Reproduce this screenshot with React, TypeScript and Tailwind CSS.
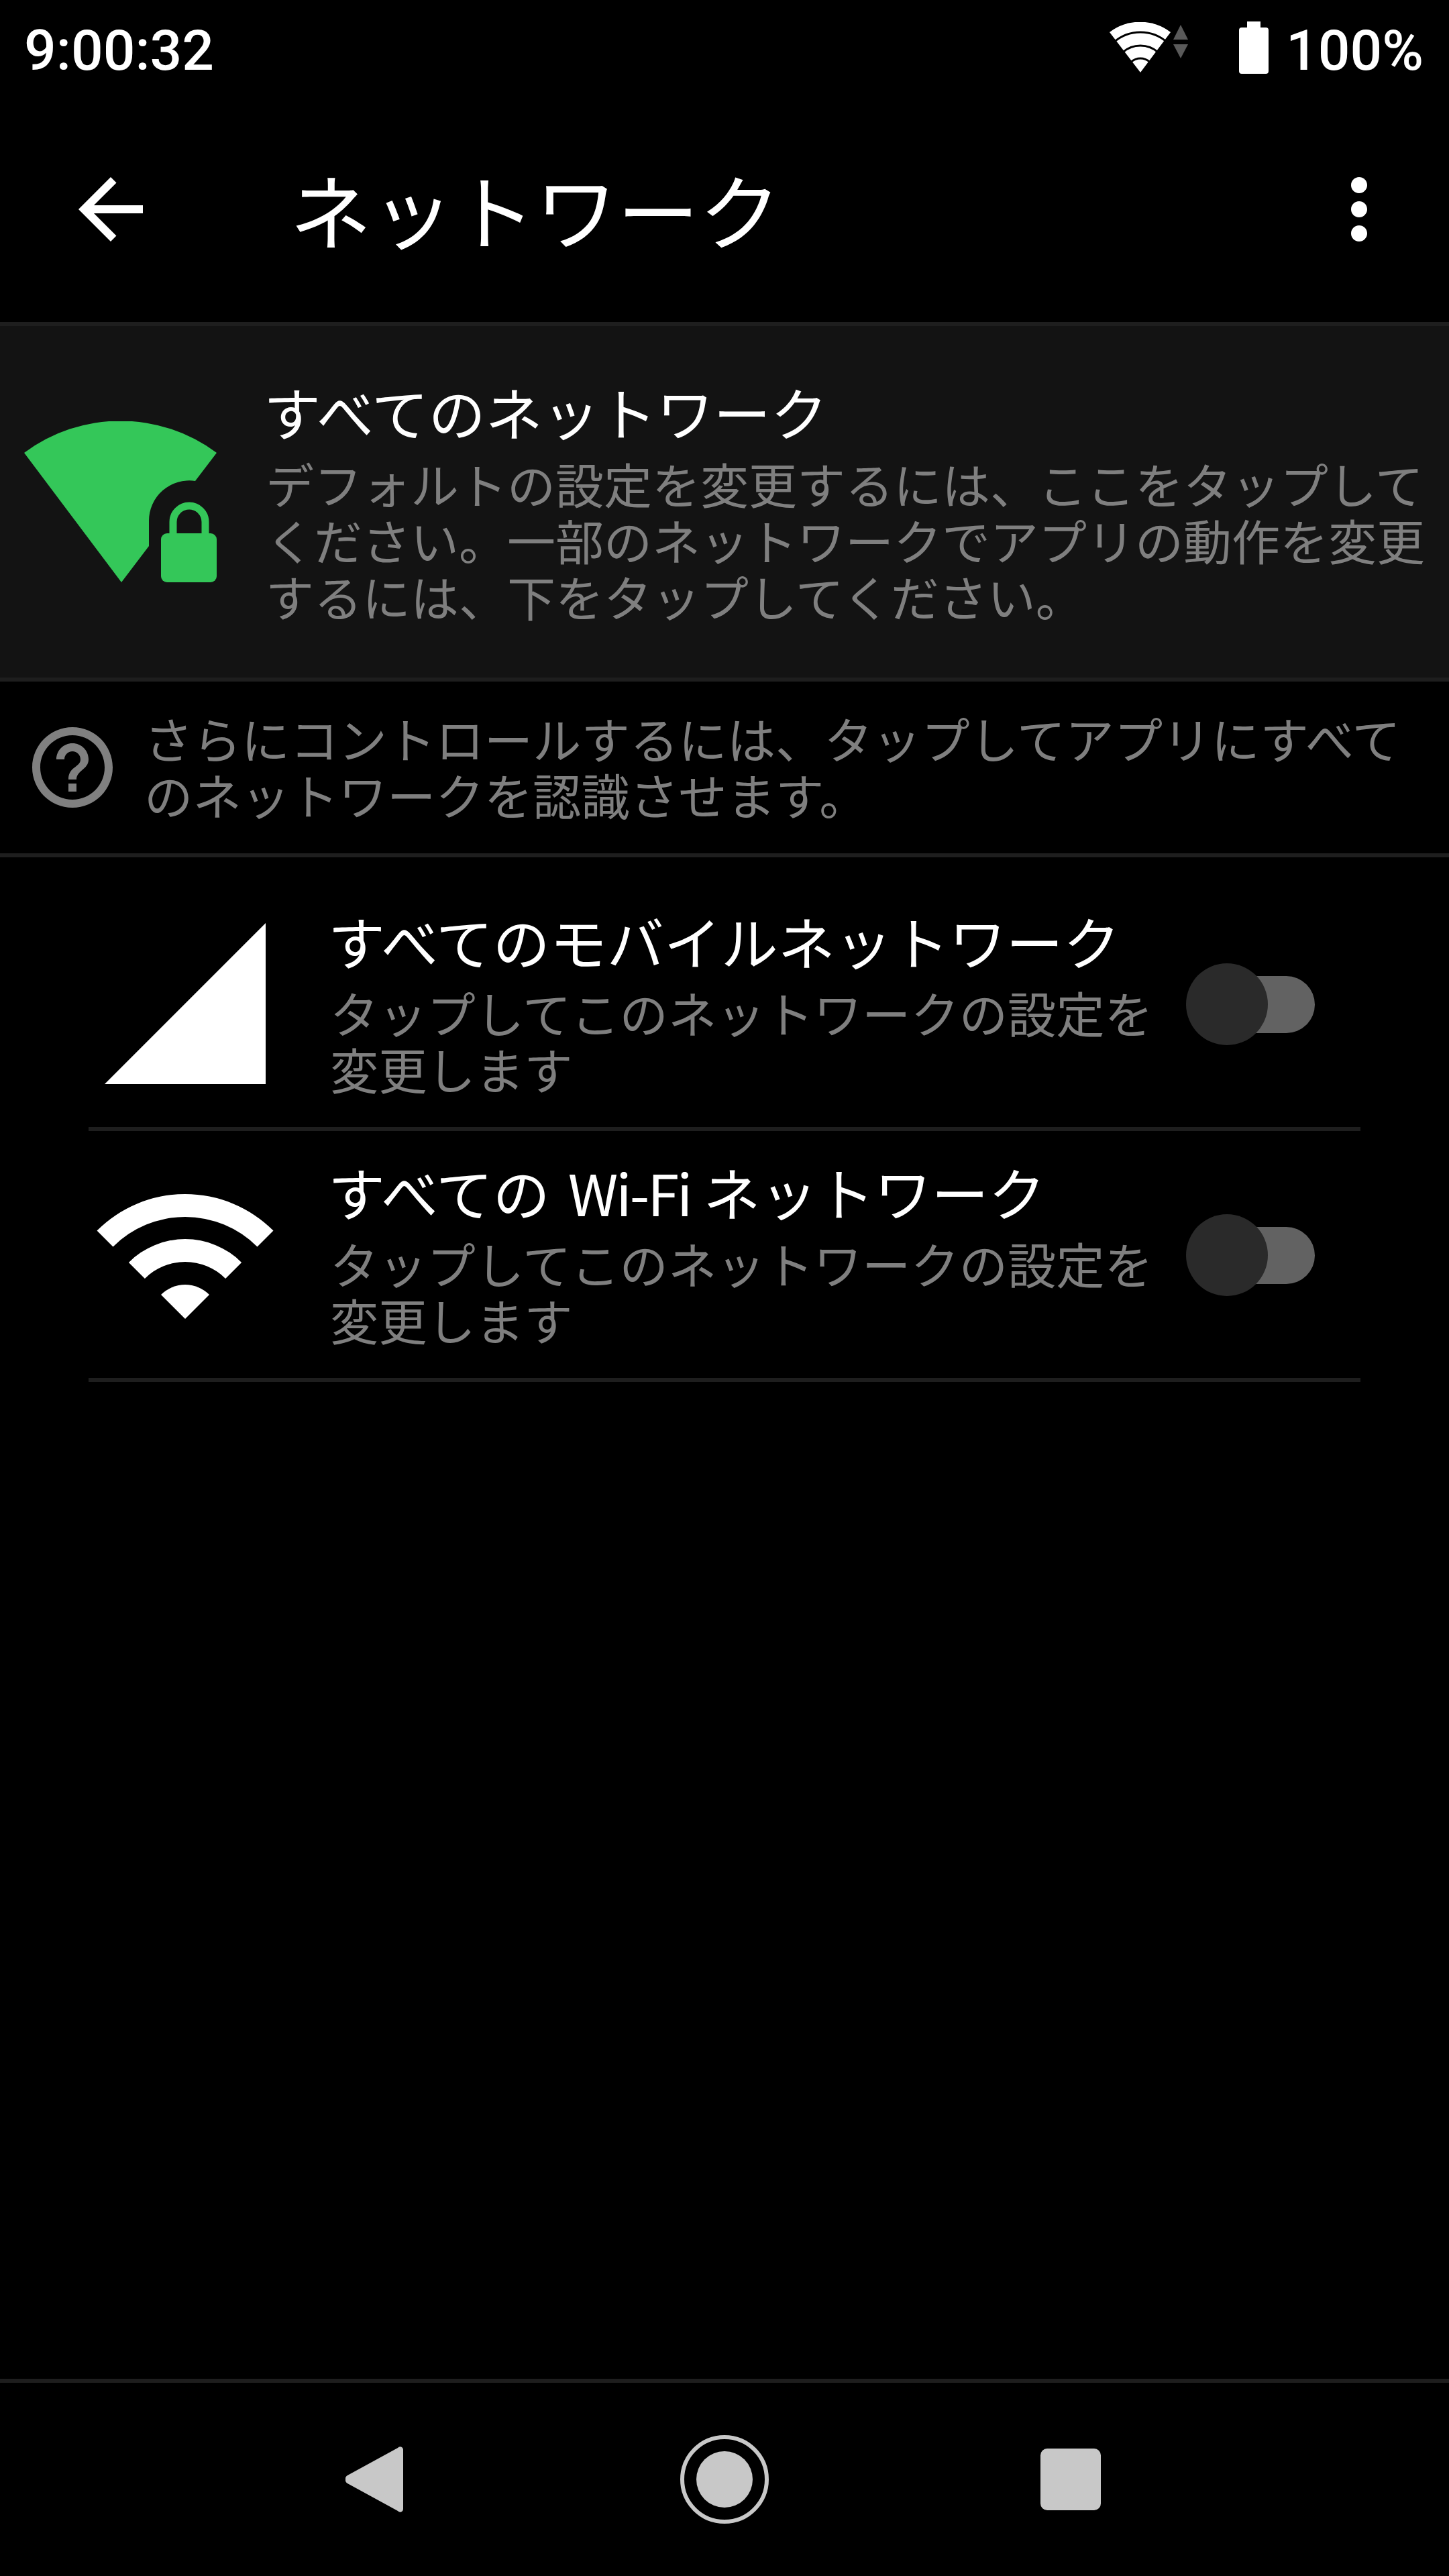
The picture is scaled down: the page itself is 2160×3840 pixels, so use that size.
import React from "react";

function SmallWifi() {
  const arc = (r: number) => {
    const x = r * 0.66;
    const y = r * 0.75;
    return `M${46 - x} ${75 - y}A${r} ${r} 0 0 1 ${46 + x} ${75 - y}`;
  };
  return (
    <svg width="92" height="76" viewBox="0 0 92 76">
      <path d="M0 15A75 75 0 0 1 91 15L46 75Z" fill="#fff" />
      <path d={arc(60)} stroke="#000" strokeWidth="3" fill="none" />
      <path d={arc(40)} stroke="#000" strokeWidth="3" fill="none" />
      <path d={arc(21)} stroke="#000" strokeWidth="3" fill="none" />
    </svg>
  );
}

function Arrows() {
  return (
    <svg width="22" height="52" viewBox="0 0 22 52" className="ml-[3px] mt-[4px]">
      <path d="M11 0L22 22H0Z" fill="#5a5a5a" />
      <path d="M0 29H22L11 50Z" fill="#5a5a5a" />
    </svg>
  );
}

function Battery() {
  return (
    <svg width="44" height="78" viewBox="0 0 44 78">
      <path d="M12 0H32V9H40a4 4 0 0 1 4 4V74a4 4 0 0 1-4 4H4a4 4 0 0 1-4-4V13a4 4 0 0 1 4-4H12Z" fill="#fff" />
    </svg>
  );
}

function GreenWifi() {
  return (
    <svg width="288" height="240" viewBox="0 0 288 240" className="shrink-0">
      <path
        d="M0 47A240 240 0 0 1 287 47L255 89A60 60 0 0 0 186 149V186L145 240Z"
        fill="#34c759"
      />
      <rect x="204" y="167" width="83" height="73" rx="9" fill="#34c759" />
      <path d="M222 170V150a24 24 0 0 1 48 0V170" stroke="#34c759" strokeWidth="11" fill="none" />
    </svg>
  );
}

function HelpIcon() {
  return (
    <svg width="144" height="144" viewBox="0 0 24 24" className="shrink-0" fill="#808080">
      <path d="M11 18h2v-2h-2v2zm1-16C6.48 2 2 6.48 2 12s4.48 10 10 10 10-4.48 10-10S17.52 2 12 2zm0 18c-4.41 0-8-3.59-8-8s3.59-8 8-8 8 3.59 8 8-3.59 8-8 8zm0-14c-2.21 0-4 1.79-4 4h2c0-1.1.9-2 2-2s2 .9 2 2c0 2-3 1.75-3 5h2c0-2.25 3-2.5 3-5 0-2.21-1.79-4-4-4z" />
    </svg>
  );
}

function Signal() {
  return (
    <svg width="240" height="240" viewBox="0 0 240 240">
      <path d="M240 0V240H0Z" fill="#fff" />
    </svg>
  );
}

function BigWifi() {
  return (
    <svg width="264" height="186" viewBox="0 0 264 186" className="mt-[6px]" fill="#fff">
      <path d="M.5 54.5A186 186 0 0 1 263.5 54.5L239.5 78.5A152 152 0 0 0 24.5 78.5Z" />
      <path d="M47.9 101.900A119 119 0 0 1 216.100 101.900L192.100 125.900A85 85 0 0 0 71.900 125.900Z" />
      <path d="M96 150A51 51 0 0 1 168 150L132 186Z" />
    </svg>
  );
}

function Switch() {
  return (
    <div className="relative ml-[23px] mt-[2px] flex h-[122px] w-[192px] shrink-0 items-center justify-end">
      <div className="h-[85px] w-[170px] rounded-full bg-[#626262]" />
      <div className="absolute left-0 top-0 h-[122px] w-[122px] rounded-full bg-[#2a2a2a]" />
    </div>
  );
}

function Row({ icon, title, sub }: { icon: React.ReactNode; title: React.ReactNode; sub: string }) {
  return (
    <div className="mx-[132px] flex h-[374px] items-center border-b-[6px] border-[#1e1e1e]">
      <div className="flex h-[240px] w-[288px] shrink-0 items-center justify-center">{icon}</div>
      <div className="-mt-[10px] ml-[69px] w-[1256px]">
        <div className="mb-[10px] text-[85px] leading-[110px] text-white">{title}</div>
        <div className="ml-[3px] text-[72.3px] leading-[84px] text-[#7f7f7f]">{sub}</div>
      </div>
      <Switch />
    </div>
  );
}

export default function App() {
  return (
    <div
      lang="ja"
      className="flex h-[3840px] w-[2160px] flex-col overflow-hidden bg-black font-['Noto_Sans_CJK_JP',sans-serif]"
    >
      <div className="flex h-[144px] shrink-0 items-start justify-between pl-[36px] pr-[38px] font-['Roboto',sans-serif] text-[84px] leading-[144px] text-white">
        <span className="font-medium leading-[151px]">9:00:32</span>
        <div className="flex items-start">
          <div className="mt-[33px] flex">
            <SmallWifi />
            <Arrows />
          </div>
          <div className="ml-[76px] mt-[32px]">
            <Battery />
          </div>
          <span className="ml-[26px] font-medium leading-[151px]">100%</span>
        </div>
      </div>

      <div className="flex h-[336px] shrink-0 items-center justify-between">
        <div className="flex items-center">
          <svg width="144" height="144" viewBox="0 0 24 24" fill="#fff" className="ml-[93px]">
            <path d="M20 11H7.83l5.59-5.59L12 4l-8 8 8 8 1.41-1.41L7.83 13H20v-2z" />
          </svg>
          <span className="-mt-[4px] ml-[195px] text-[122px] leading-[144px] text-white">ネットワーク</span>
        </div>
        <svg width="144" height="144" viewBox="0 0 24 24" fill="#fff" className="mr-[62px]">
          <path d="M12 8c1.100 0 2-.9 2-2s-.9-2-2-2-2 .9-2 2 .9 2 2 2zm0 2c-1.100 0-2 .9-2 2s.9 2 2 2 2-.9 2-2-.9-2-2-2zm0 6c-1.100 0-2 .9-2 2s.9 2 2 2 2-.9 2-2-.9-2-2-2z" />
        </svg>
      </div>

      <div className="flex h-[536px] shrink-0 border-y-[6px] border-[#1e1e1e] bg-[#131313] pl-[36px]">
        <div className="mt-[142px]">
          <GreenWifi />
        </div>
        <div className="ml-[69px] mt-[72px] w-[1748px]">
          <div className="mb-[10px] text-[85px] leading-[110px] text-white">すべてのネットワーク</div>
          <div className="ml-[3px] text-[72px] leading-[84px] text-[#7f7f7f]">
            デフォルトの設定を変更するには、ここをタップしてください。一部のネットワークでアプリの動作を変更するには、下をタップしてください。
          </div>
        </div>
      </div>

      <div className="flex h-[262px] shrink-0 items-center border-b-[6px] border-[#1e1e1e] pl-[36px]">
        <HelpIcon />
        <div className="-mt-[4px] ml-[35px] w-[1908px] text-[72.4px] leading-[84px] text-[#7f7f7f]">
          さらにコントロールするには、タップしてアプリにすべてのネットワークを認識させます。
        </div>
      </div>

      <div className="flex-1 pt-[34px]">
        <Row icon={<Signal />} title="すべてのモバイルネットワーク" sub="タップしてこのネットワークの設定を変更します" />
        <Row
          icon={<BigWifi />}
          title={
            <>
              すべての <span className="ml-[8px] tracking-[-3px]">Wi-Fi</span> ネットワーク
            </>
          }
          sub="タップしてこのネットワークの設定を変更します"
        />
      </div>

      <div className="flex h-[294px] shrink-0 items-start border-t-[6px] border-[#1e1e1e]">
        <svg width="86" height="98" viewBox="0 0 86 98" className="ml-[515px] mt-[95px]" fill="#c8c8c8">
          <path d="M78 2a4.500 4.500 0 0 1 8 3V93a4.500 4.500 0 0 1-8 3L3 55a7 7 0 0 1 0-12Z" />
        </svg>
        <svg width="132" height="134" viewBox="0 0 132 134" className="ml-[413px] mt-[77px]">
          <circle cx="66" cy="67" r="63" fill="none" stroke="#c8c8c8" strokeWidth="6" />
          <circle cx="66" cy="67" r="42" fill="#c8c8c8" />
        </svg>
        <div className="ml-[405px] mt-[98px] h-[92px] w-[90px] rounded-[10px] bg-[#c8c8c8]" />
      </div>
    </div>
  );
}
